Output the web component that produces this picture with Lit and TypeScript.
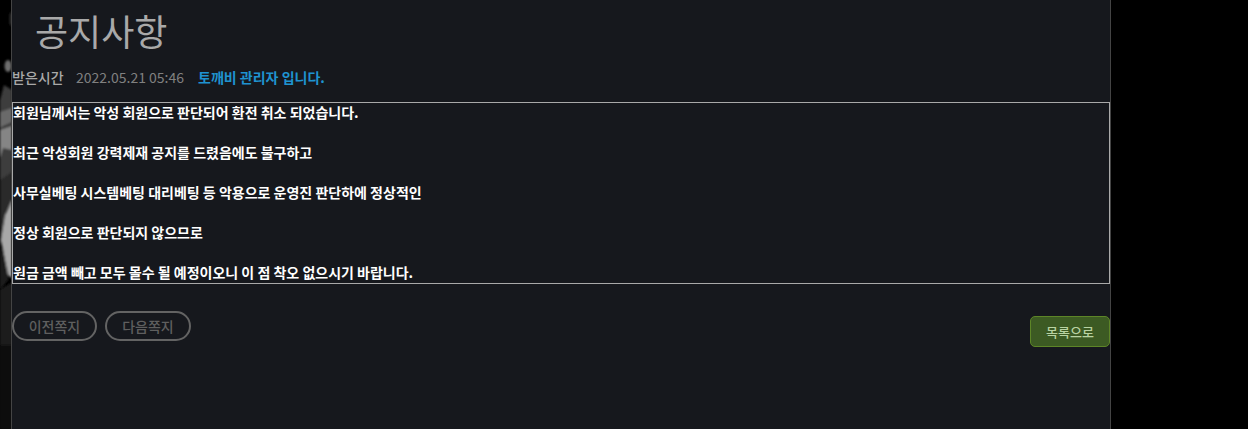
import { LitElement, html, css, svg } from "lit";
import { customElement } from "lit/decorators.js";

const lines = [
  "회원님께서는 악성 회원으로 판단되어 환전 취소 되었습니다.",
  "최근 악성회원 강력제재 공지를 드렸음에도 불구하고",
  "사무실베팅 시스템베팅 대리베팅 등 악용으로 운영진 판단하에 정상적인",
  "정상 회원으로 판단되지 않으므로",
  "원금 금액 빼고 모두 몰수 될 예정이오니 이 점 착오 없으시기 바랍니다.",
];

@customElement("app-root")
export class AppRoot extends LitElement {
  static styles = css`
    :host {
      display: block;
      height: 429px;
      overflow: hidden;
      background: #000;
      font-family: "Noto Sans CJK KR", "Noto Sans", sans-serif;
      position: relative;
    }
    .bg {
      position: absolute;
      left: 0;
      top: 0;
      width: 12px;
      height: 429px;
    }
    .panel {
      box-sizing: border-box;
      position: relative;
      margin-left: 11px;
      width: 1100px;
      height: 429px;
      background: #16181d;
      border-left: 1px solid #444;
      border-right: 1px solid #444;
      display: flex;
      flex-direction: column;
    }
    h1 {
      margin: 0;
      height: 58px;
      padding: 4px 0 0 23px;
      box-sizing: border-box;
      font-size: 36px;
      line-height: 52px;
      font-weight: 400;
      color: #a9a9a9;
    }
    .meta {
      display: flex;
      height: 44px;
      align-items: flex-start;
      padding-top: 6px;
      box-sizing: border-box;
      font-size: 14px;
      line-height: 26px;
      font-weight: 500;
    }
    .meta .label { color: #a9a9a9; width: 64px; }
    .meta .date { color: #808080; width: 122px; font-weight: 400; }
    .meta .who { color: #1f93d0; font-weight: 700; }
    .box {
      box-sizing: border-box;
      width: 1098px;
      height: 182px;
      border: 1px solid #a9a9a9;
      color: #fff;
      font-size: 14px;
      font-weight: 700;
      line-height: 20px;
    }
    .box p { margin: 0; }
    .box p:first-child { margin-top: -1px; }
    .actions {
      display: flex;
      justify-content: space-between;
      align-items: flex-start;
      padding-top: 27px;
    }
    .pager { display: flex; gap: 8px; }
    .pill {
      box-sizing: border-box;
      height: 30px;
      width: 85px;
      border: 2px solid #636363;
      border-radius: 15px;
      background: transparent;
      color: #5f5f5f;
      font: 500 14px "Noto Sans CJK KR", sans-serif;
      padding: 0;
    }
    .pill + .pill { width: 86px; }
    .list {
      box-sizing: border-box;
      margin-top: 5px;
      width: 80px;
      height: 31px;
      border: 1px solid #5d8527;
      border-radius: 5px;
      background: #3c5a23;
      color: #b9d3a2;
      font: 500 13px "Noto Sans CJK KR", sans-serif;
      padding: 0;
    }
  `;

  render() {
    return html`
      <svg class="bg" viewBox="0 0 12 429" preserveAspectRatio="none">
        <defs>
          <filter id="soft" x="-50%" y="-10%" width="200%" height="120%"><feGaussianBlur stdDeviation="1.2"></feGaussianBlur></filter>
        </defs>
        <rect width="12" height="429" fill="#000"></rect>
        ${svg`<g filter="url(#soft)">
          <ellipse cx="11" cy="19" rx="1.5" ry="7" fill="#2e2e2e"></ellipse>
          <ellipse cx="8" cy="66" rx="3.5" ry="6" fill="#6e6e6e"></ellipse>
          <path d="M4 85 L12 90 L12 205 L0 190 L0 100 Z" fill="#3c3c3c"></path>
          <path d="M0 112 L12 108 L12 122 L3 126 L0 128 Z" fill="#6a6a6a"></path>
          <path d="M0 130 L12 126 L12 150 L3 148 L0 158 Z" fill="#858585"></path>
          <path d="M0 180 L12 172 L12 200 L5 212 L0 250 Z" fill="#2a2a2a"></path>
          <path d="M12 200 L12 278 L8 275 L1 240 L5 215 Z" fill="#a8a8a8"></path>
          <path d="M0 250 L3 248 L8 280 L0 290 Z" fill="#1e1e1e"></path>
          <path d="M0 290 L12 282 L12 429 L0 429 Z" fill="#1a1a1a"></path>
          <path d="M0 345 L12 345 L12 429 L0 429 Z" fill="#111"></path>
        </g>`}
      </svg>
      <div class="panel">
        <h1>공지사항</h1>
        <div class="meta">
          <span class="label">받은시간</span>
          <span class="date">2022.05.21 05:46</span>
          <span class="who">토깨비 관리자 입니다.</span>
        </div>
        <div class="box">
          ${lines.map((l) => html`<p>${l}</p><p>&nbsp;</p>`)}
        </div>
        <div class="actions">
          <div class="pager">
            <button class="pill">이전쪽지</button>
            <button class="pill">다음쪽지</button>
          </div>
          <button class="list">목록으로</button>
        </div>
      </div>
    `;
  }
}
